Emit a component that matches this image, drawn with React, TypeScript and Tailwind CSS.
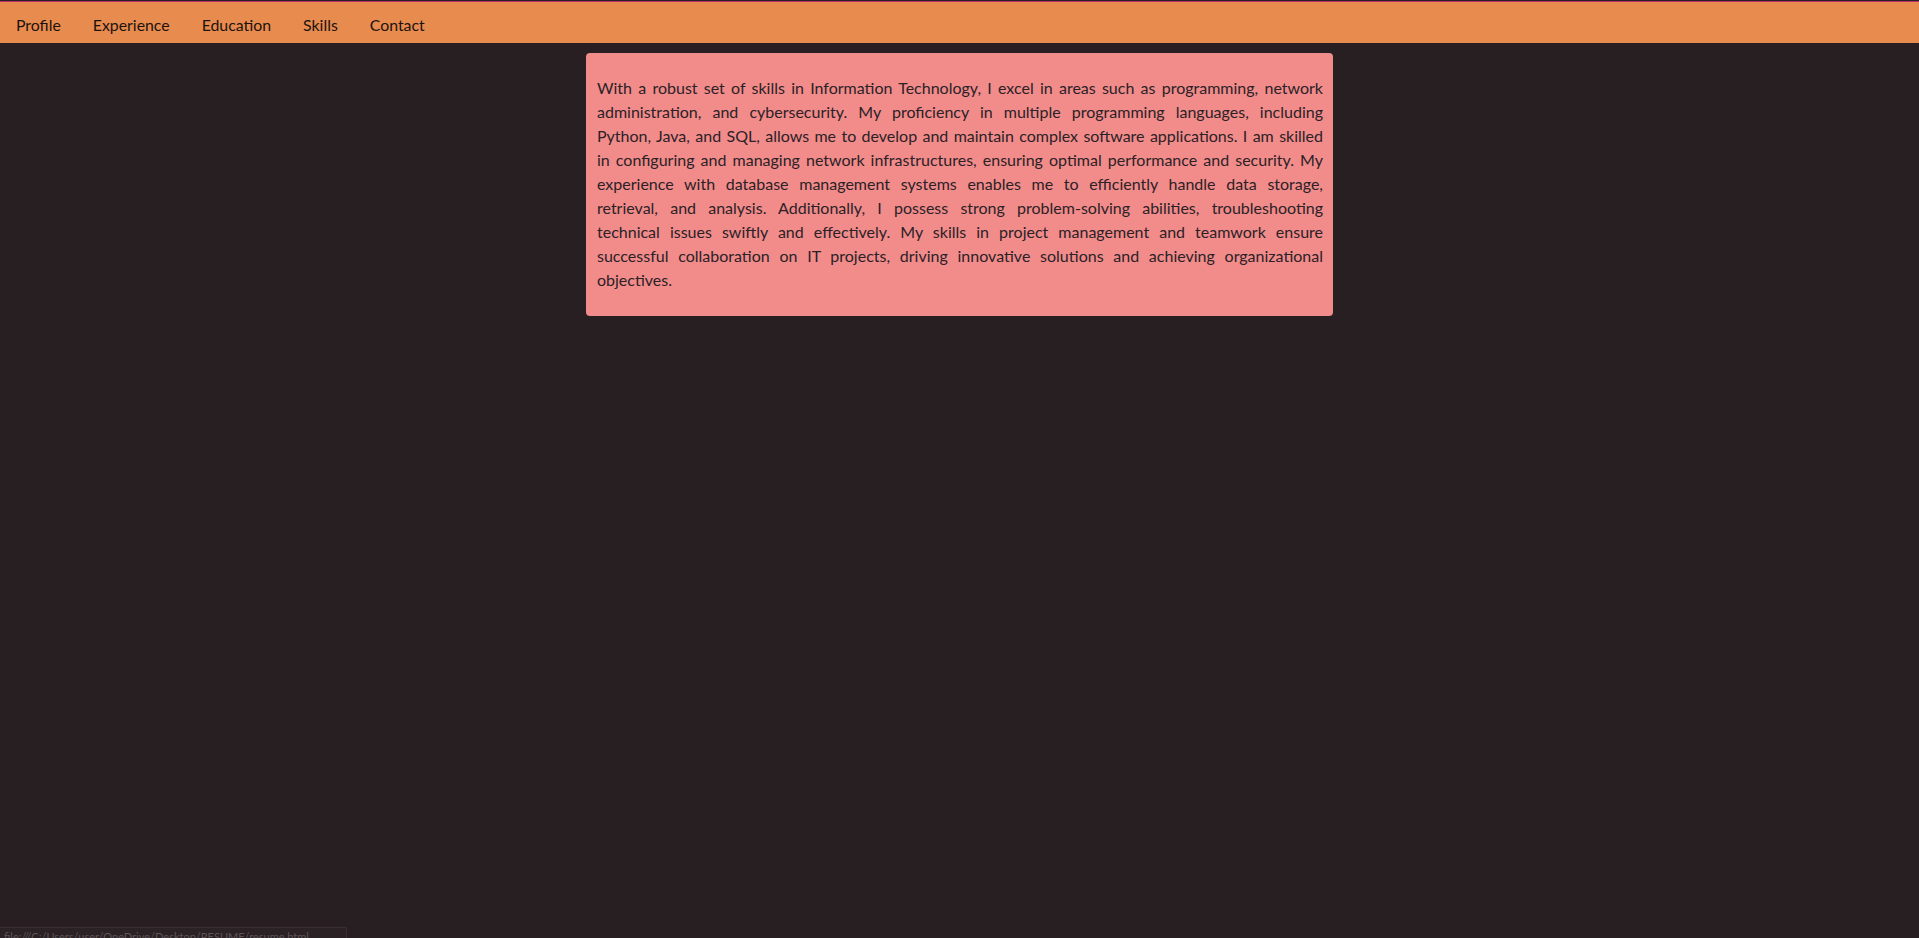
import React from "react";

const lines = [
  "With a robust set of skills in Information Technology, I excel in areas such as programming, network",
  "administration, and cybersecurity. My proficiency in multiple programming languages, including",
  "Python, Java, and SQL, allows me to develop and maintain complex software applications. I am skilled",
  "in configuring and managing network infrastructures, ensuring optimal performance and security. My",
  "experience with database management systems enables me to efficiently handle data storage,",
  "retrieval, and analysis. Additionally, I possess strong problem-solving abilities, troubleshooting",
  "technical issues swiftly and effectively. My skills in project management and teamwork ensure",
  "successful collaboration on IT projects, driving innovative solutions and achieving organizational",
];

export default function App() {
  const nav = ["Profile", "Experience", "Education", "Skills", "Contact"];
  return (
    <div
      className="relative h-[938px] w-full overflow-hidden bg-[#271f22] pt-px"
      style={{ fontFamily: "Lato, 'Noto Sans', sans-serif" }}
    >
      <div className="border-t border-[#b8306e] bg-[#e88b4f]">
        <nav className="flex h-[41px] items-center pt-[5px]">
          {nav.map((n) => (
            <a key={n} className="px-4 text-[15.85px] text-[#1c120e]">
              {n}
            </a>
          ))}
        </nav>
      </div>
      <div className="mx-auto mt-[10px] w-[747px] rounded-[4px] bg-[#f28c8a] pl-[11px] pr-[10px] pt-[23px] pb-[24px] text-[16px] leading-[24px] text-[#2b2127]">
        {lines.map((l, i) => (
          <div key={i} className="text-justify [text-align-last:justify]">
            {l}
          </div>
        ))}
        <div>objectives.</div>
      </div>
      <div className="absolute bottom-0 left-0 h-[11px] w-[347px] overflow-hidden rounded-tr-[2px] border-t border-r border-[#3a3034] bg-[#2a2225] pl-1 pt-[2px] text-[11px] leading-[13px] text-[#5e5458]">
        file:///C:/Users/user/OneDrive/Desktop/RESUME/resume.html
      </div>
    </div>
  );
}
